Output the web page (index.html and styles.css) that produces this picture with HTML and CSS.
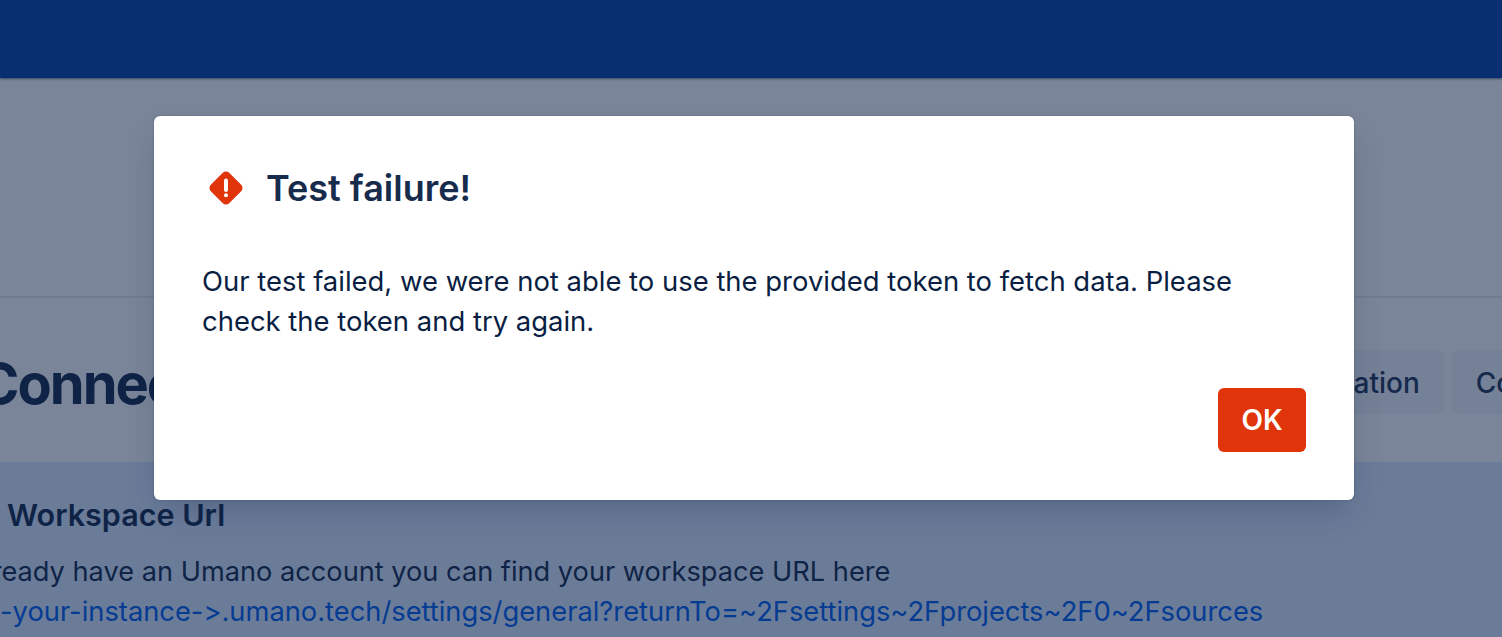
FILE: index.html
```html
<!DOCTYPE html>
<html lang="en">
    <head>
        <meta charset="UTF-8">
        <title>Umano connector</title>
        <link rel="stylesheet" href="styles.css">
    </head>
    <body>
        <nav class="topbar"></nav>

        <header class="page_header">
            <h1 class="page_title">Connect to Umano</h1>
            <div class="page_actions">
                <button type="button" class="tab_button">Documentation</button>
                <button type="button" class="tab_button">Configuration</button>
            </div>
        </header>

        <section class="info_panel">
            <h2 class="info_title">Workspace Url</h2>
            <p class="info_text">If you already have an Umano account you can find your workspace URL here</p>
            <a class="info_link" href="#">https://&lt;-your-instance-&gt;.umano.tech/settings/general?returnTo=~2Fsettings~2Fprojects~2F0~2Fsources</a>
        </section>

        <div class="overlay">
            <div class="modal">
                <div class="modal_head">
                    <svg class="modal_icon" width="36" height="36" viewBox="0 0 36 36">
                        <rect x="5" y="5" width="26" height="26" rx="4.5" transform="rotate(45 18 18)" fill="#e0350b"/>
                        <rect x="16" y="8.5" width="4" height="13.5" rx="2" fill="#fff"/>
                        <circle cx="18" cy="25.2" r="2" fill="#fff"/>
                    </svg>
                    <h2 class="modal_title">Test failure!</h2>
                </div>
                <p class="modal_text">Our test failed, we were not able to use the provided token to fetch data. Please check the token and try again.</p>
                <div class="modal_foot">
                    <button type="button" class="ok_button">OK</button>
                </div>
            </div>
        </div>
    </body>
</html>
```

FILE: styles.css
```css
* {
    margin: 0;
    padding: 0;
    box-sizing: border-box;
}
html, body {
    height: 100%;
    overflow: hidden;
}
body {
    background-color: #ffffff;
    color: #172b4d;
    font-family: Inter, "Liberation Sans", sans-serif;
    font-feature-settings: "calt" 0;
    position: relative;
}
.topbar {
    height: 78px;
    background-color: #0747a6;
    box-shadow: 0 1px 2px rgba(9, 30, 66, 0.6);
}
.page_header {
    height: 384px;
    padding-top: 218px;
    display: flex;
    justify-content: space-between;
    background-image: linear-gradient(#ebecf0, #ebecf0);
    background-size: 100% 2px;
    background-position: 0 218px;
    background-repeat: no-repeat;
}
.page_title {
    margin: 53px 0 0 -22px;
    font-size: 56px;
    line-height: 70px;
    font-weight: 700;
    letter-spacing: -2px;
    white-space: nowrap;
}
.page_actions {
    display: flex;
    gap: 8px;
    margin: 54px -181px 0 0;
}
.tab_button {
    height: 64px;
    padding: 0 24px 0;
    border: 0;
    border-radius: 6px;
    background-color: rgba(9, 30, 66, 0.04);
    color: #253858;
    font-family: inherit;
    font-feature-settings: inherit;
    font-size: 28px;
    line-height: 66px;
    font-weight: 500;
}
.info_panel {
    background-color: #deebff;
    height: 175px;
    padding: 33px 0 0 0;
    margin-left: -110px;
    white-space: nowrap;
}
.info_title {
    margin-left: 117px;
    font-size: 30.5px;
    line-height: 40px;
    font-weight: 600;
}
.info_text {
    margin-top: 17px;
    font-size: 27.2px;
    line-height: 40px;
}
.info_link {
    font-size: 27.3px;
    line-height: 40px;
    color: #0060f0;
    text-decoration: none;
}
.overlay {
    position: absolute;
    top: 0;
    left: 0;
    right: 0;
    bottom: 0;
    padding: 116px 0 0 154px;
    background-color: rgba(9, 30, 66, 0.54);
}
.modal {
    width: 1200px;
    height: 384px;
    padding: 48px;
    background-color: #ffffff;
    border-radius: 6px;
    box-shadow: 0 0 2px rgba(9, 30, 66, 0.3), 0 16px 32px -8px rgba(9, 30, 66, 0.25);
}
.modal_head {
    display: flex;
    align-items: center;
    gap: 22px;
    height: 48px;
}
.modal_icon {
    flex: none;
    margin-left: 6px;
}
.modal_title {
    font-size: 36px;
    line-height: 48px;
    font-weight: 600;
}
.modal_text {
    margin-top: 49px;
    font-size: 27.45px;
    line-height: 40px;
    color: #091e42;
}
.modal_foot {
    display: flex;
    justify-content: flex-end;
    margin-top: 47px;
}
.ok_button {
    width: 88px;
    height: 64px;
    border: 0;
    border-radius: 6px;
    background-color: #e0350b;
    color: #ffffff;
    font-family: inherit;
    font-size: 28px;
    font-weight: 600;
}
```
